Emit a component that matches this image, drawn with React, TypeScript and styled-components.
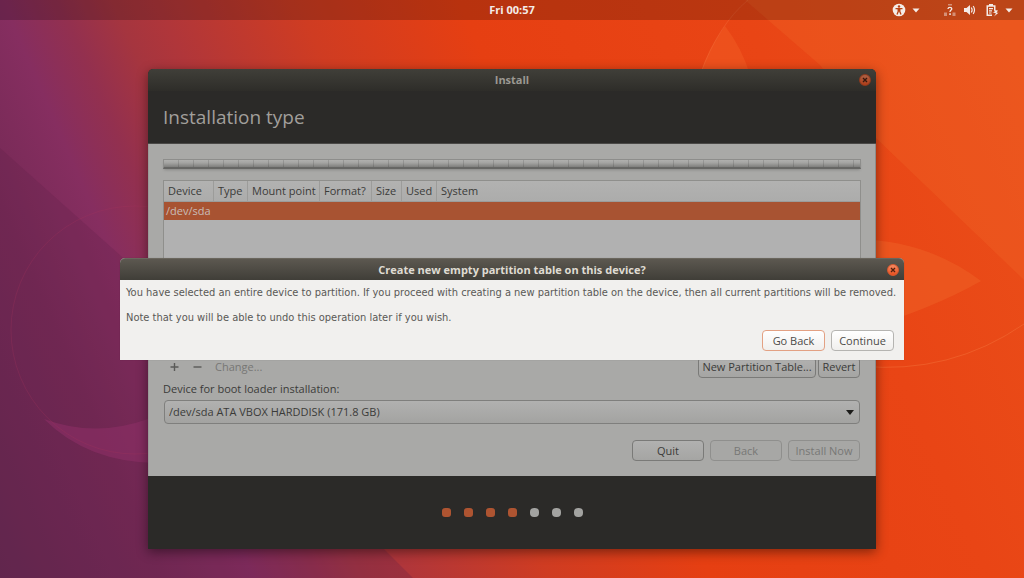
import React from "react";
import styled, { createGlobalStyle, css } from "styled-components";

const Global = createGlobalStyle`
  * { box-sizing: border-box; }
  body { margin: 0; font-family: "Open Sans", "Noto Sans", sans-serif; font-size: 11px; line-height: 16px; }
  button, select { font: inherit; margin: 0; }
`;

const Desktop = styled.div`
  position: relative;
  min-height: 100vh;
  display: flex;
  flex-direction: column;
  overflow: hidden;
  background: #e84010;
`;

const WallpaperSvg = styled.svg`
  position: absolute;
  inset: 0;
  width: 100%;
  height: 100%;
`;

const TopBar = styled.header`
  position: relative;
  display: grid;
  grid-template-columns: 1fr auto 1fr;
  align-items: center;
  height: 20px;
  padding: 0 11px;
  background: rgba(0, 0, 0, 0.2);
  color: #f4ece8;
`;

const Clock = styled.time`
  grid-column: 2;
  font-weight: 700;
`;

const Indicators = styled.div`
  display: flex;
  justify-content: flex-end;
  gap: 23px;
`;

const Indicator = styled.button`
  display: flex;
  align-items: center;
  gap: 6px;
  padding: 0;
  border: 0;
  background: none;
  color: inherit;
  svg { display: block; }
`;

const Stage = styled.main`
  position: relative;
  display: flex;
  justify-content: center;
  padding: 49px 24px 29px;
`;

const InstallWindow = styled.section`
  width: 100%;
  max-width: 728px;
  border-radius: 5px 5px 0 0;
  overflow: hidden;
  background: #2b2a28;
`;

const WindowShadow = styled.div`
  position: relative;
  width: 100%;
  max-width: 728px;
  border-radius: 5px 5px 0 0;
  box-shadow: 0 3px 12px rgba(0, 0, 0, 0.45);
`;

const TitleBar = styled.div<{ $active?: boolean }>`
  display: grid;
  grid-template-columns: 1fr auto 1fr;
  align-items: center;
  height: 22px;
  padding: 0 5px;
  border-radius: 5px 5px 0 0;
  font-weight: 700;
  ${(p) =>
    p.$active
      ? css`
          background: linear-gradient(#5c5850, #403e38);
          border-top: 1px solid #6a665d;
          color: #dfdbd2;
        `
      : css`
          background: linear-gradient(#403f39, #2e2d29);
          color: #9c9992;
        `}
`;

const TitleText = styled.span`
  grid-column: 2;
`;

const CloseButton = styled.button<{ $active?: boolean }>`
  justify-self: end;
  display: flex;
  align-items: center;
  justify-content: center;
  width: 12px;
  height: 12px;
  padding: 0;
  border: 1px solid ${(p) => (p.$active ? "#d9582e" : "#8f3a1e")};
  border-radius: 50%;
  background: ${(p) => (p.$active ? "linear-gradient(#f58a63, #e8501f)" : "linear-gradient(#ab6145, #b03d18)")};
  color: ${(p) => (p.$active ? "#50200f" : "#35180e")};
`;

const PageHeader = styled.div`
  display: flex;
  align-items: center;
  height: 53px;
  padding: 0 15px;
  border-bottom: 1px solid #4a4947;
`;

const PageTitle = styled.h1`
  margin: 0;
  font-size: 19px;
  line-height: 24px;
  font-weight: 400;
  color: #a19f9b;
`;

const Content = styled.div`
  display: flex;
  flex-direction: column;
  padding: 15px 14px;
  background: #a9a9a7;
  border-left: 1px solid #9b9b99;
  border-right: 1px solid #8d8d8b;
  color: #3b3b39;
`;

const DiskBar = styled.div`
  height: 10px;
  margin-bottom: 11px;
  border: 1px solid #8d8d8b;
  border-bottom: 2px solid #666664;
  background:
    repeating-linear-gradient(90deg, transparent 0 14px, rgba(0, 0, 0, 0.12) 14px 15px),
    linear-gradient(#b0b0ae, #a4a4a2 40%, #7f7f7d);
  box-shadow: 0 2px 3px -1px rgba(0, 0, 0, 0.2);
`;

const TableFrame = styled.div`
  height: 174px;
  border: 1px solid #8f8f8c;
  background: #b1b1b1;
`;

const PartitionTable = styled.table`
  width: 100%;
  table-layout: fixed;
  border-collapse: separate;
  border-spacing: 0;
`;

const HeadCell = styled.th`
  height: 21px;
  padding: 0 0 0 4px;
  border-right: 1px solid #9c9c9a;
  border-bottom: 1px solid #9c9c9a;
  background: linear-gradient(#b2b2b1, #acacab);
  font-weight: 400;
  text-align: left;
  white-space: nowrap;
  &:last-child { border-right: 0; }
`;

const SelectedCell = styled.td`
  height: 18px;
  padding: 0 2px;
  background: #a85332;
  color: #c8bdb8;
`;

const Col = styled.col<{ $w?: number }>`
  ${(p) => p.$w && `width: ${p.$w}px;`}
`;

const Row = styled.div`
  display: flex;
  align-items: center;
`;

const EditRow = styled(Row)`
  height: 20px;
  margin-top: 3px;
  padding: 0 1px;
  gap: 2px;
`;

const FlatButton = styled.button`
  display: flex;
  align-items: center;
  justify-content: center;
  height: 20px;
  padding: 0 5px;
  border: 0;
  background: none;
  color: #777775;
  svg { display: block; }
`;

const Spacer = styled.span`
  flex: 1;
`;

const Button = styled.button<{ $width: number }>`
  width: ${(p) => p.$width}px;
  height: 21px;
  padding: 0;
  border: 1px solid #7a7a78;
  border-radius: 4px;
  background: linear-gradient(#b1b1b0, #a5a5a3);
  color: #3b3b39;
  line-height: 16px;
  white-space: nowrap;
  &:disabled {
    border-color: #8f8f8d;
    background: #a7a7a5;
    color: #787876;
  }
`;

const FieldLabel = styled.label`
  margin-top: 4px;
`;

const SelectWrap = styled.div`
  position: relative;
  display: flex;
  margin-top: 3px;
  padding: 0 1px;
`;

const Select = styled.select`
  appearance: none;
  width: 100%;
  height: 24px;
  padding: 0 20px 0 4px;
  border: 1px solid #7f7f7d;
  border-radius: 4px;
  background: linear-gradient(#b1b1b0, #a3a3a1);
  color: #3b3b39;
`;

const SelectArrow = styled.svg`
  position: absolute;
  right: 7px;
  top: 10px;
  pointer-events: none;
`;

const NavRow = styled(Row)`
  justify-content: flex-end;
  gap: 6px;
  margin-top: 16px;
  padding: 0 1px;
`;

const Footer = styled.footer`
  display: flex;
  align-items: center;
  justify-content: center;
  gap: 13px;
  height: 73px;
  background: #2b2a28;
`;

const Dot = styled.span<{ $done: boolean }>`
  width: 9px;
  height: 9px;
  border-radius: ${(p) => (p.$done ? 3 : 4)}px;
  background: ${(p) => (p.$done ? "#ae5431" : "#a3a3a1")};
`;

const Dialog = styled.section`
  position: absolute;
  top: 50%;
  left: 50%;
  width: calc(100% + 56px);
  transform: translate(-50%, -50%);
  border-radius: 5px 5px 0 0;
  background: #f1f0ee;
  box-shadow: 0 0 1px rgba(0, 0, 0, 0.3);
`;

const DialogBody = styled.div`
  display: flex;
  flex-direction: column;
  padding: 5px 6px 9px;
  color: #5a5956;
`;

const Message = styled.p`
  margin: 0 0 9px;
  font-family: "DejaVu Sans Condensed", "Open Sans", sans-serif;
`;

const LastMessage = styled(Message)`
  margin: 0 0 4px;
`;

const DialogActions = styled(Row)`
  justify-content: flex-end;
  gap: 6px;
  padding-right: 4px;
`;

const DialogButton = styled(Button)<{ $focus?: boolean }>`
  border-color: ${(p) => (p.$focus ? "#e3a183" : "#b5b4b1")};
  background: linear-gradient(#ffffff, #f0efed);
  color: #4c4b48;
`;

const Cross = () => (
  <svg width="6" height="6" viewBox="0 0 6 6" aria-hidden="true">
    <path d="M1 1 5 5M5 1 1 5" stroke="currentColor" strokeWidth="1.3" />
  </svg>
);

const Caret = () => (
  <svg width="8" height="5" viewBox="0 0 8 5" aria-hidden="true">
    <path d="M.5.5h7L4 4.5z" fill="currentColor" />
  </svg>
);

const Wallpaper = () => (
  <WallpaperSvg viewBox="0 0 1024 578" preserveAspectRatio="none" aria-hidden="true">
    <defs>
      <linearGradient id="sky" gradientUnits="userSpaceOnUse" x1="0" y1="578" x2="1066" y2="113">
        <stop offset="0" stopColor="#62284f" />
        <stop offset=".13" stopColor="#762a56" />
        <stop offset=".2" stopColor="#862e60" />
        <stop offset=".245" stopColor="#93304f" />
        <stop offset=".287" stopColor="#a5353f" />
        <stop offset=".323" stopColor="#b0363a" />
        <stop offset=".433" stopColor="#cf3c22" />
        <stop offset=".56" stopColor="#e63f12" />
        <stop offset=".78" stopColor="#e94515" />
        <stop offset="1" stopColor="#ea501a" />
      </linearGradient>
    </defs>
    <rect width="1024" height="578" fill="url(#sky)" />
    <path d="M0 148 380 487V545L413 578H0z" fill="#5e2048" opacity=".25" />
    <path d="M44 419Q95 438 148 419L200 400V460Q100 475 44 419z" fill="#8c2f66" opacity=".6" />
    <circle cx="135" cy="330" r="124" fill="none" stroke="#a8345a" opacity=".25" />
    <path d="M745 0H1024V280L876 138 820 65z" fill="#f06a2a" opacity=".28" />
    <path d="M725 26Q742 48 750 75H700Q708 48 725 26z" fill="#f5682a" opacity=".35" />
    <path d="M700 75Q718 25 748 0" fill="none" stroke="#f47a48" opacity=".3" />
    <path d="M840 240Q920 235 981 281 930 310 860 330z" fill="#f0682a" opacity=".4" />
    <path d="M860 366Q950 375 1024 324" fill="none" stroke="#f47a40" opacity=".4" />
  </WallpaperSvg>
);

const StatusIcons = () => (
  <svg width="56" height="14" viewBox="0 0 56 14" aria-hidden="true">
    <g fill="currentColor">
      <path d="M5 1h4v1.500H5zM1 9.500h3V13H1zM9.500 9.500h3V13h-3z" opacity=".45" />
      <path d="M4.900 6q.3-1.700 2-1.700 1.900 0 1.900 1.500 0 .9-1 1.500Q7 7.900 7 9" fill="none" stroke="currentColor" strokeWidth="1.300" />
      <path d="M6.300 10.300h1.500V12H6.300z" />
      <path d="M21 5h2.500L27 2v10l-3.500-3H21z" />
      <path d="M28.300 4.500Q30 7 28.300 9.500M30.200 3Q32.800 7 30.200 11" fill="none" stroke="currentColor" strokeWidth="1.200" />
      <path fillRule="evenodd" d="M46 1h4v1.200h2.500V7l-1.500 1V3.700h-6V11.500h4V13h-5.500V2.200H46z" />
      <path d="M46 5h4v1.200h-4zM46 7.200h3v1.200h-3zM46 9.400h2.500v1.200H46z" />
      <path d="M51.500 7v2H49.500L53 10.500 51 13.500l4.500-3.800h-2L55 7.500z" />
    </g>
  </svg>
);

const columns = ["Device", "Type", "Mount point", "Format?", "Size", "Used", "System"];
const columnWidths = [50, 34, 72, 52, 30, 35];

export default function App() {
  return (
    <>
      <Global />
      <Desktop>
        <Wallpaper />
        <TopBar>
          <Clock>Fri 00:57</Clock>
          <Indicators>
            <Indicator aria-label="Accessibility">
              <svg width="14" height="14" viewBox="0 0 14 14" aria-hidden="true">
                <circle cx="7" cy="7" r="6.300" fill="currentColor" />
                <circle cx="7" cy="3.500" r="1.200" fill="#b84215" />
                <path d="M3.500 5.600h7M7 5v3.500M6.200 6v2.500L5 11.500M7.800 6v2.500L9 11.500" stroke="#b84215" strokeWidth="1.300" fill="none" />
              </svg>
              <Caret />
            </Indicator>
            <Indicator aria-label="System">
              <StatusIcons />
              <Caret />
            </Indicator>
          </Indicators>
        </TopBar>
        <Stage>
          <WindowShadow>
            <InstallWindow aria-label="Install">
              <TitleBar>
                <TitleText>Install</TitleText>
                <CloseButton aria-label="Close">
                  <Cross />
                </CloseButton>
              </TitleBar>
              <PageHeader>
                <PageTitle>Installation type</PageTitle>
              </PageHeader>
              <Content>
                <DiskBar />
                <TableFrame>
                  <PartitionTable>
                    <colgroup>
                      {columnWidths.map((w, i) => (
                        <Col key={i} $w={w} />
                      ))}
                      <Col />
                    </colgroup>
                    <thead>
                      <tr>
                        {columns.map((c) => (
                          <HeadCell key={c} scope="col">{c}</HeadCell>
                        ))}
                      </tr>
                    </thead>
                    <tbody>
                      <tr>
                        <SelectedCell colSpan={7}>/dev/sda</SelectedCell>
                      </tr>
                    </tbody>
                  </PartitionTable>
                </TableFrame>
                <EditRow>
                  <FlatButton aria-label="Add">
                    <svg width="11" height="10" viewBox="0 0 11 10"><path d="M1.500 5h8M5.500 1v8" stroke="#5a5a58" strokeWidth="1.400" /></svg>
                  </FlatButton>
                  <FlatButton aria-label="Remove">
                    <svg width="11" height="10" viewBox="0 0 11 10"><path d="M1.500 5h8" stroke="#5a5a58" strokeWidth="1.400" /></svg>
                  </FlatButton>
                  <FlatButton disabled>Change...</FlatButton>
                  <Spacer />
                  <Button $width={118}>New Partition Table...</Button>
                  <Button $width={42}>Revert</Button>
                </EditRow>
                <FieldLabel htmlFor="boot-device">Device for boot loader installation:</FieldLabel>
                <SelectWrap>
                  <Select id="boot-device">
                    <option>/dev/sda ATA VBOX HARDDISK (171.8 GB)</option>
                  </Select>
                  <SelectArrow width="8" height="5" viewBox="0 0 8 5" aria-hidden="true">
                    <path d="M0 0h8L4 5z" fill="#1c1c1a" />
                  </SelectArrow>
                </SelectWrap>
                <NavRow>
                  <Button $width={72}>Quit</Button>
                  <Button $width={72} disabled>Back</Button>
                  <Button $width={72} disabled>Install Now</Button>
                </NavRow>
              </Content>
              <Footer>
                {[0, 1, 2, 3, 4, 5, 6].map((n) => (
                  <Dot key={n} $done={n < 4} />
                ))}
              </Footer>
            </InstallWindow>
            <Dialog role="dialog" aria-labelledby="dialog-title">
              <TitleBar $active>
                <TitleText id="dialog-title">Create new empty partition table on this device?</TitleText>
                <CloseButton $active aria-label="Close dialog">
                  <Cross />
                </CloseButton>
              </TitleBar>
              <DialogBody>
                <Message>
                  You have selected an entire device to partition. If you proceed with creating a new partition table on the
                  device, then all current partitions will be removed.
                </Message>
                <LastMessage>Note that you will be able to undo this operation later if you wish.</LastMessage>
                <DialogActions>
                  <DialogButton $width={63} $focus>Go Back</DialogButton>
                  <DialogButton $width={63}>Continue</DialogButton>
                </DialogActions>
              </DialogBody>
            </Dialog>
          </WindowShadow>
        </Stage>
      </Desktop>
    </>
  );
}
